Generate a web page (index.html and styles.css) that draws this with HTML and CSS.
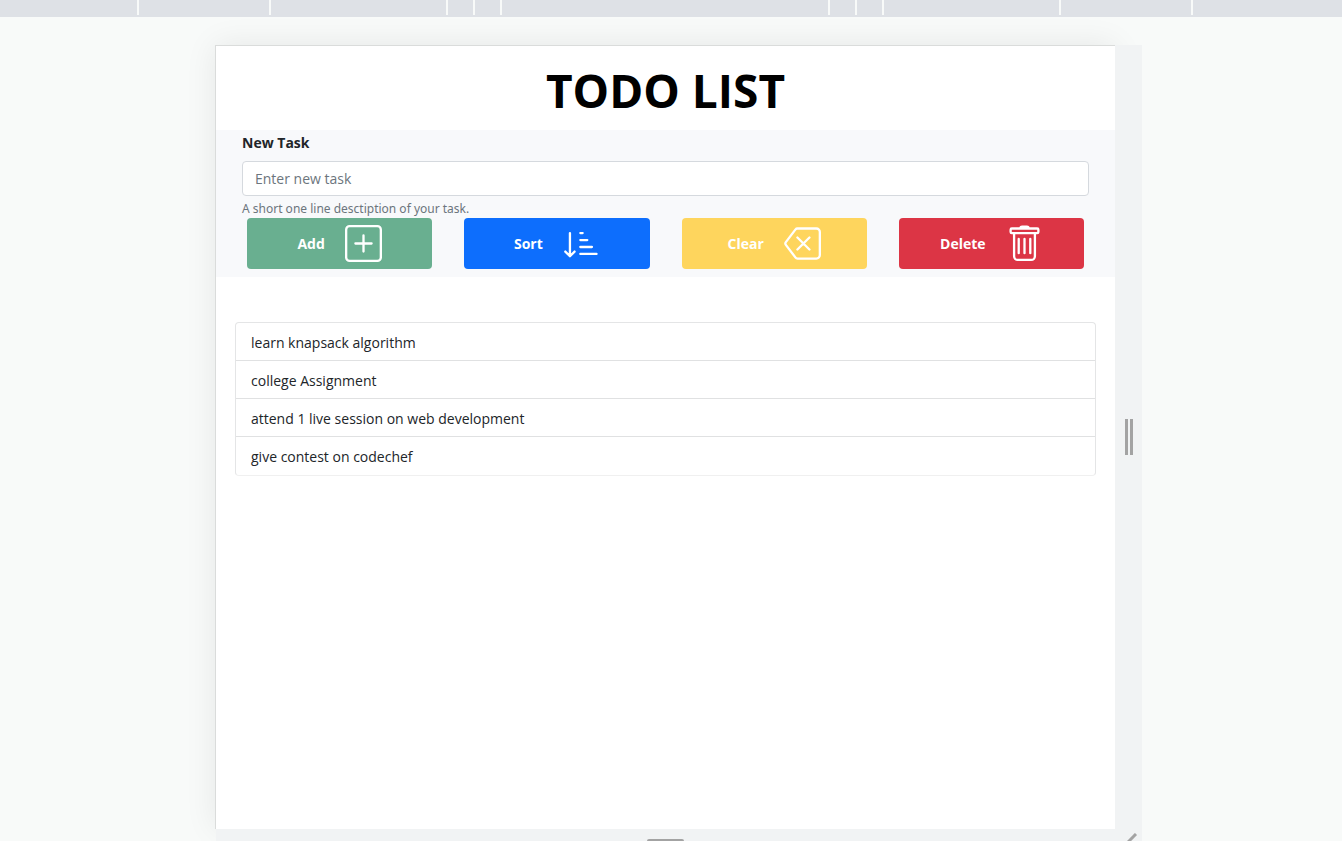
FILE: index.html
```html
<!DOCTYPE html>
<html lang="en">
<head>
<meta charset="utf-8">
<title>Todo List</title>
<link rel="stylesheet" href="styles.css">
</head>
<body>
<div class="ruler" aria-hidden="true">
  <span class="seg seg-edge"></span><span class="seg seg-md"></span><span class="seg seg-lg"></span><span class="seg seg-sm"></span><span class="seg seg-sm"></span><span class="seg seg-center"></span><span class="seg seg-sm"></span><span class="seg seg-sm"></span><span class="seg seg-lg"></span><span class="seg seg-md"></span><span class="seg seg-edge"></span>
</div>
<div class="stage">
  <div class="device">
    <main class="app">
      <h1 class="title">TODO LIST</h1>
      <form class="task-form">
        <label class="label" for="task">New Task</label>
        <input class="field" id="task" type="text" placeholder="Enter new task" aria-describedby="task-help">
        <small class="help" id="task-help">A short one line desctiption of your task.</small>
        <div class="actions">
          <button class="btn btn-add" type="button">Add
            <svg class="icon" viewBox="0 0 16 16"><rect x=".5" y=".5" width="15" height="15" rx="1.5"/><path d="M8 4.500v7M4.500 8h7"/></svg>
          </button>
          <button class="btn btn-sort" type="button">Sort
            <svg class="icon" viewBox="0 0 16 16"><path d="M3 3.500v10M1 11.500l2 2 2-2M7.500 3.500H8.500M7.500 6.500H10.500M7.500 9.500H12.500M7.500 12.500H14.500"/></svg>
          </button>
          <button class="btn btn-clear" type="button">Clear
            <svg class="icon" viewBox="0 0 16 16"><path d="M5.800 1.500H14A1.500 1.500 0 0 1 15.500 3V13A1.500 1.500 0 0 1 14 14.500H5.800a1 1 0 0 1-.8-.4L.8 8.600a1 1 0 0 1 0-1.200L5 1.900a1 1 0 0 1 .8-.4zM5.800 5.400l5.200 5.200M11 5.400l-5.200 5.200"/></svg>
          </button>
          <button class="btn btn-delete" type="button">Delete
            <svg class="icon" viewBox="0 0 16 16"><path d="M6.200 1.500a.8.8 0 0 1 .8-.8h2a.8.8 0 0 1 .8.8M2.500 1.500h11a.5.5 0 0 1 .5.5v1a.5.5 0 0 1-.5.5h-11A.5.5 0 0 1 2 3V2a.5.5 0 0 1 .5-.5zM3.500 3.500V13.500A1.600 1.600 0 0 0 5.100 15.100h5.800a1.600 1.600 0 0 0 1.600-1.600V3.500M5.500 6v6.200M8 6v6.200M10.500 6v6.200"/></svg>
          </button>
        </div>
      </form>
      <ul class="tasks">
        <li class="task">learn knapsack algorithm</li>
        <li class="task">college Assignment</li>
        <li class="task">attend 1 live session on web development</li>
        <li class="task">give contest on codechef</li>
      </ul>
    </main>
    <div class="handle handle-side"><span class="grip"></span></div>
    <div class="handle handle-bottom"><span class="grip-flat"></span></div>
    <div class="handle handle-corner"><svg class="corner" viewBox="0 0 12 8"><path d="M0 10L9 1"/></svg></div>
  </div>
</div>
</body>
</html>
```
FILE: styles.css
```css
* { box-sizing: border-box; }

body {
  margin: 0;
  height: 100vh;
  overflow: hidden;
  display: flex;
  flex-direction: column;
  background: #f8faf9;
  color: #212529;
  font-family: "Segoe UI", "Open Sans", "Noto Sans", sans-serif;
  font-size: 14px;
  line-height: 22px;
}

.ruler {
  display: flex;
  height: 17px;
  padding-right: 13px;
  background: #dee1e6;
}
.seg { height: 15px; border-right: 2px solid #f8faf9; }
.seg-edge { flex: 1; }
.seg-edge:last-child { border-right: 0; }
.seg-md { width: 132px; }
.seg-lg { width: 177px; }
.seg-sm { width: 27px; }
.seg-center { width: 328px; }

.stage {
  flex: 1;
  min-height: 0;
  display: flex;
  padding: 28px 200px 0 215px;
}
.device {
  flex: 1;
  display: grid;
  grid-template-columns: minmax(0, 1fr) 27px;
  grid-template-rows: minmax(0, 1fr) 12px;
}
.app {
  background: #fff;
  border: 1px solid #dadcdb;
  border-width: 1px 0 0 1px;
  box-shadow: 0 0 30px rgba(0, 0, 0, 0.08);
}
.handle {
  position: relative;
  display: flex;
  align-items: center;
  justify-content: center;
  background: #f1f3f4;
}
.handle-bottom { align-items: flex-end; margin-left: 1px; }
.handle-corner { align-items: flex-end; justify-content: flex-start; padding-left: 12px; }
.grip {
  width: 8px;
  height: 36px;
  border: solid #a3a3a3;
  border-width: 0 3px;
}
.grip-flat {
  width: 37px;
  height: 2px;
  border-radius: 2px 2px 0 0;
  background: #a3a3a3;
}
.corner { width: 12px; height: 8px; fill: none; stroke: #a3a3a3; stroke-width: 3; }

.title {
  margin: 0;
  padding: 14px 0 10px;
  color: #000;
  font-size: 46px;
  font-weight: 700;
  line-height: 60px;
  text-align: center;
}

.task-form {
  display: flex;
  flex-direction: column;
  padding: 2px 26px 8px;
  background: #f8f9fb;
}
.label { margin-bottom: 7px; font-weight: 700; }
.field {
  width: 100%;
  height: 35px;
  padding: 0 12px;
  border: 1px solid #d5d9de;
  border-radius: 4px;
  background: #fff;
  color: #212529;
  font: inherit;
}
.field::placeholder { color: #6c757d; opacity: 1; }
.help {
  margin-top: 4px;
  color: #6c757d;
  font-family: "Segoe UI", "Noto Sans", sans-serif;
  font-size: 12px;
  line-height: 18px;
}

.actions {
  display: grid;
  grid-template-columns: repeat(4, minmax(0, 1fr));
  gap: 32px;
  padding: 0 5px;
}
.btn {
  display: flex;
  align-items: center;
  justify-content: center;
  gap: 20px;
  height: 51px;
  padding: 0;
  border: 0;
  border-radius: 4px;
  color: #fff;
  font: inherit;
  font-weight: 700;
}
.btn-add { background: #69af90; }
.btn-sort { background: #0d6efd; }
.btn-clear { background: #fed55d; }
.btn-delete { background: #dc3545; }
.icon {
  width: 37px;
  height: 37px;
  fill: none;
  stroke: #fff;
  stroke-linecap: round;
  stroke-linejoin: round;
}

.tasks {
  margin: 45px 19px 0;
  padding: 0;
  list-style: none;
  border: 1px solid #e4e5e6;
  border-bottom-color: #f0f0f0;
  border-radius: 4px;
}
.task { padding: 9px 15px 6px; }
.task + .task { border-top: 1px solid #e0e1e2; }
.task:last-child { padding-bottom: 7px; }
```
